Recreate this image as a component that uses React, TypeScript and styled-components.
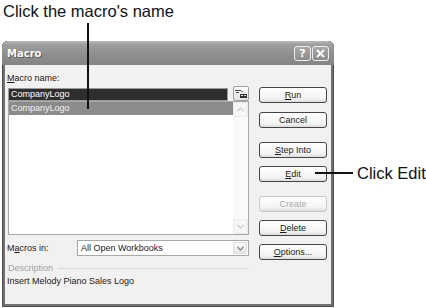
import styled, { createGlobalStyle } from 'styled-components';

const GlobalStyle = createGlobalStyle`
  html,
  body {
    margin: 0;
    padding: 0;
    background: #ffffff;
  }

  body {
    width: 426px;
    height: 308px;
    overflow: hidden;
    font-family: 'Liberation Sans', Arial, sans-serif;
  }
`;

const Page = styled.div`
  position: relative;
  width: 426px;
  height: 308px;
  padding-top: 2px;
  box-sizing: border-box;
`;

const Caption = styled.div`
  margin-left: 3px;
  font-size: 16.5px;
  line-height: 19px;
  color: #111;
`;

const PointerLine = styled.div`
  position: absolute;
  left: 87px;
  top: 23px;
  width: 1.5px;
  height: 86px;
  background: #111;
`;

const Callout = styled.div`
  position: absolute;
  left: 315px;
  top: 163px;
  display: flex;
  align-items: center;
  height: 20px;
  gap: 4px;

  .line {
    width: 38px;
    height: 1.5px;
    background: #111;
  }

  .text {
    font-size: 16.5px;
    color: #111;
  }
`;

const Window = styled.div`
  width: 332px;
  height: 266px;
  margin: 20px 0 0 2px;
  display: flex;
  flex-direction: column;
  border-radius: 6px 6px 0 0;
  background: #727272;
  overflow: hidden;
  box-shadow: inset 1px 0 #4d4d4d, inset -1px 0 #4d4d4d, inset 0 -1px #4d4d4d;
`;

const TitleBar = styled.div`
  height: 24px;
  flex: none;
  display: flex;
  align-items: center;
  justify-content: space-between;
  padding: 0 5px 0 5px;
  background: linear-gradient(#bcbcbc 0, #a0a0a0 3px, #909090 50%, #848484 100%);
  border-radius: 6px 6px 0 0;

  .title {
    font-family: 'DejaVu Sans', sans-serif;
    font-weight: bold;
    font-size: 10px;
    color: #fafafa;
    text-shadow: 1px 1px 0 #5a5a5a;
  }
`;

const CaptionButtons = styled.div`
  display: flex;
  gap: 1px;
`;

const CaptionButton = styled.div`
  width: 17px;
  height: 15px;
  box-sizing: border-box;
  border: 1px solid #eeeeee;
  border-radius: 3px;
  background: linear-gradient(#aaaaaa, #8c8c8c);
  display: flex;
  align-items: center;
  justify-content: center;
  color: #fff;
  font-family: 'DejaVu Sans', sans-serif;
  font-weight: bold;
  font-size: 11px;
  line-height: 1;
`;

const Frame = styled.div`
  flex: 1;
  display: flex;
  padding: 0 3px 3px;
`;

const Body = styled.div`
  flex: 1;
  display: grid;
  grid-template-columns: 241px 68px;
  column-gap: 10px;
  align-items: start;
  padding: 7px 0 0 3px;
  background: #f1f1f1;
  font-size: 9px;
  color: #1a1a1a;
`;

const LeftColumn = styled.div`
  display: flex;
  flex-direction: column;
`;

const Label = styled.div`
  height: 12px;
  line-height: 12px;
  margin-left: -1px;
  white-space: nowrap;
`;

const NameRow = styled.div`
  margin-top: 2px;
  display: flex;
  align-items: flex-start;
`;

const NameInput = styled.div`
  width: 220px;
  height: 13px;
  margin-top: 2px;
  box-sizing: border-box;
  border: 1px solid #9c9c9c;
  background: #2e2e2e;
  color: #fff;
  line-height: 11px;
  padding-left: 2px;
`;

const CollapseButton = styled.div`
  width: 16px;
  height: 15px;
  margin-left: 5px;
  box-sizing: border-box;
  border: 1px solid #a0a0a0;
  border-radius: 2px;
  background: linear-gradient(#fdfdfd, #e2e2e2);
  display: flex;
  align-items: center;
  justify-content: center;
`;

const ListBox = styled.div`
  height: 134px;
  box-sizing: border-box;
  border: 1px solid #a8a8a8;
  background: #fff;
  display: flex;
`;

const ListItems = styled.div`
  flex: 1;
`;

const ListRow = styled.div<{ $selected?: boolean }>`
  height: 13px;
  line-height: 13px;
  padding-left: 2px;
  background: ${(p) => (p.$selected ? '#8b8b8b' : 'transparent')};
  color: ${(p) => (p.$selected ? '#f2f2f2' : '#1a1a1a')};
`;

const ScrollBar = styled.div`
  width: 15px;
  display: flex;
  flex-direction: column;
  justify-content: space-between;
  background: #fafafa;
`;

const ArrowBox = styled.div`
  width: 15px;
  height: 15px;
  box-sizing: border-box;
  border: 1px solid #eaeaea;
  border-radius: 2px;
  background: #f6f6f6;
  display: flex;
  align-items: center;
  justify-content: center;
`;

const ComboRow = styled.div`
  margin-top: 5px;
  height: 16px;
  display: flex;
  align-items: center;

  ${Label} {
    width: 70px;
  }
`;

const Combo = styled.div`
  flex: 1;
  height: 16px;
  box-sizing: border-box;
  border: 1px solid #a8a8a8;
  background: #fff;
  display: flex;
  align-items: center;
  justify-content: space-between;
  padding: 0 1px 0 3px;
`;

const ComboArrow = styled(ArrowBox)`
  width: 14px;
  height: 12px;
  border-color: #dcdcdc;
  background: linear-gradient(#fbfbfb, #e6e6e6);
`;

const GroupHeader = styled.div`
  margin-top: 7px;
  display: flex;
  align-items: center;
  gap: 5px;
  color: #a2a2a2;

  .rule {
    flex: 1;
    height: 1px;
    background: #dadada;
  }
`;

const DescriptionText = styled.div`
  margin-top: 2px;
  height: 12px;
  line-height: 12px;
  margin-left: -1px;
`;

const RightColumn = styled.div`
  display: flex;
  flex-direction: column;
  padding-top: 15px;
`;

const Button = styled.div<{ $gap: number; $disabled?: boolean }>`
  margin-top: ${(p) => p.$gap}px;
  height: 16px;
  box-sizing: border-box;
  border: 1px solid ${(p) => (p.$disabled ? '#c9c9c9' : '#454545')};
  border-radius: 3px;
  background: linear-gradient(#ffffff, #f3f3f3 75%, #dcdcdc);
  color: ${(p) => (p.$disabled ? '#ababab' : '#1a1a1a')};
  display: flex;
  align-items: center;
  justify-content: center;

  &:first-child {
    margin-top: 0;
  }
`;

const Chevron = ({ up, color }: { up?: boolean; color: string }) => (
  <svg width='7' height='5' viewBox='0 0 7 5'>
    <path
      d={up ? 'M0.5 4 L3.5 1 L6.5 4' : 'M0.5 1 L3.5 4 L6.5 1'}
      fill='none'
      stroke={color}
      strokeWidth='1.3'
    />
  </svg>
);

const buttons = [
  { key: 'run', gap: 0, label: <><u>R</u>un</> },
  { key: 'cancel', gap: 9, label: 'Cancel' },
  { key: 'step', gap: 14, label: <><u>S</u>tep Into</> },
  { key: 'edit', gap: 8, label: <><u>E</u>dit</> },
  { key: 'create', gap: 14, label: 'Create', disabled: true },
  { key: 'delete', gap: 8, label: <><u>D</u>elete</> },
  { key: 'options', gap: 8, label: <><u>O</u>ptions...</> },
];

const App = () => {
  return (
    <>
      <GlobalStyle />
      <Page>
        <Caption>Click the macro's name</Caption>
        <Window>
          <TitleBar>
            <span className='title'>Macro</span>
            <CaptionButtons>
              <CaptionButton>?</CaptionButton>
              <CaptionButton>
                <svg width='9' height='9' viewBox='0 0 9 9'>
                  <path d='M1 1 L8 8 M8 1 L1 8' stroke='#fff' strokeWidth='1.8' />
                </svg>
              </CaptionButton>
            </CaptionButtons>
          </TitleBar>
          <Frame>
            <Body>
              <LeftColumn>
                <Label>
                  <u>M</u>acro name:
                </Label>
                <NameRow>
                  <NameInput>CompanyLogo</NameInput>
                  <CollapseButton>
                    <svg width='12' height='9' viewBox='0 0 12 9'>
                      <path d='M0 1.5 H6 M1 3.5 H4' stroke='#444' strokeWidth='1' />
                      <path d='M6 1.5 L8 3.5' stroke='#444' strokeWidth='1' />
                      <rect x='5' y='5' width='7' height='4' fill='#333' />
                      <rect x='6' y='6' width='2' height='1' fill='#ddd' />
                      <rect x='9' y='6' width='2' height='1' fill='#ddd' />
                    </svg>
                  </CollapseButton>
                </NameRow>
                <ListBox>
                  <ListItems>
                    <ListRow $selected>CompanyLogo</ListRow>
                  </ListItems>
                  <ScrollBar>
                    <ArrowBox>
                      <Chevron up color='#cfcfcf' />
                    </ArrowBox>
                    <ArrowBox>
                      <Chevron color='#cfcfcf' />
                    </ArrowBox>
                  </ScrollBar>
                </ListBox>
                <ComboRow>
                  <Label>
                    M<u>a</u>cros in:
                  </Label>
                  <Combo>
                    <span>All Open Workbooks</span>
                    <ComboArrow>
                      <Chevron color='#8a8a8a' />
                    </ComboArrow>
                  </Combo>
                </ComboRow>
                <GroupHeader>
                  <span>Description</span>
                  <span className='rule' />
                </GroupHeader>
                <DescriptionText>Insert Melody Piano Sales Logo</DescriptionText>
              </LeftColumn>
              <RightColumn>
                {buttons.map((b) => (
                  <Button key={b.key} $gap={b.gap} $disabled={b.disabled}>
                    {b.label}
                  </Button>
                ))}
              </RightColumn>
            </Body>
          </Frame>
        </Window>
        <PointerLine />
        <Callout>
          <span className='line' />
          <span className='text'>Click Edit</span>
        </Callout>
      </Page>
    </>
  );
};

export default App;
